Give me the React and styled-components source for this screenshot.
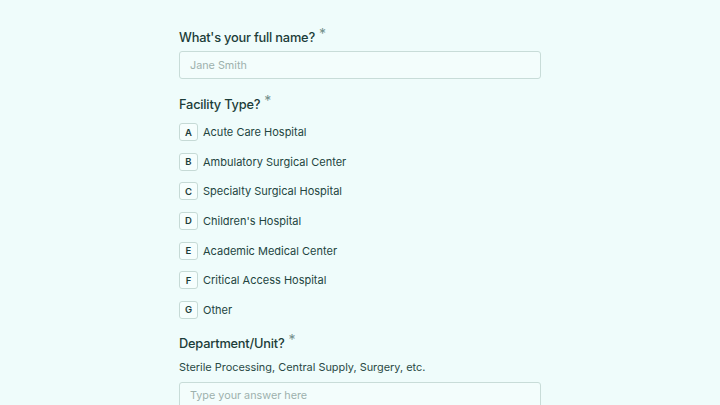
import React from "react";
import styled, { createGlobalStyle } from "styled-components";

const Global = createGlobalStyle`
  html, body { margin: 0; padding: 0; background: #effcfb; }
  body { font-family: Inter, "Noto Sans", sans-serif; -webkit-font-smoothing: antialiased; }
  * { box-sizing: border-box; }
`;

const Page = styled.div`
  width: 720px;
  height: 405px;
  overflow: hidden;
  display: flex;
  justify-content: center;
  padding-top: 27px;
`;

const Form = styled.div`
  width: 362px;
  display: flex;
  flex-direction: column;
`;

const Label = styled.div`
  font-size: 12.8px;
  line-height: 20px;
  font-weight: 500;
  letter-spacing: -0.2px;
  color: #1c3d39;
  margin-top: ${(p) => p.$mt || 0}px;
`;

const Star = styled.span`
  color: #74908b;
  font-size: 14px;
  font-weight: 400;
  margin-left: 4px;
  position: relative;
  top: -3px;
`;

const Input = styled.div`
  margin-top: ${(p) => p.$mt}px;
  height: 28px;
  flex-shrink: 0;
  border: 1px solid #c8dcd8;
  border-radius: 3px;
  background: #f3fdfc;
  display: flex;
  align-items: center;
  padding-left: 10px;
  font-size: 10.8px;
  color: #9db1ad;
`;

const Options = styled.div`
  margin-top: 8px;
  display: flex;
  flex-direction: column;
  gap: 11.67px;
`;

const Option = styled.div`
  display: flex;
  align-items: center;
  height: 18px;
  gap: 5px;
`;

const Key = styled.div`
  width: 19px;
  height: 18px;
  border: 1px solid #c6dad6;
  border-radius: 3px;
  background: #f6fefd;
  display: flex;
  align-items: center;
  justify-content: center;
  font-size: 9.5px;
  font-weight: 600;
  color: #1c3d39;
`;

const OptionText = styled.span`
  font-size: 11px;
  color: #234541;
`;

const Desc = styled.div`
  margin-top: 4px;
  font-size: 10.9px;
  line-height: 18px;
  color: #2a4a46;
`;

const options = [
  ["A", "Acute Care Hospital"],
  ["B", "Ambulatory Surgical Center"],
  ["C", "Specialty Surgical Hospital"],
  ["D", "Children's Hospital"],
  ["E", "Academic Medical Center"],
  ["F", "Critical Access Hospital"],
  ["G", "Other"],
];

export default function App() {
  return (
    <>
      <Global />
      <Page>
        <Form>
          <Label>
            What's your full name?<Star>*</Star>
          </Label>
          <Input $mt={3}>Jane Smith</Input>
          <Label $mt={15}>
            Facility Type?<Star>*</Star>
          </Label>
          <Options>
            {options.map(([k, t]) => (
              <Option key={k}>
                <Key>{k}</Key>
                <OptionText>{t}</OptionText>
              </Option>
            ))}
          </Options>
          <Label $mt={14}>
            Department/Unit?<Star>*</Star>
          </Label>
          <Desc>Sterile Processing, Central Supply, Surgery, etc.</Desc>
          <Input $mt={6}>Type your answer here</Input>
        </Form>
      </Page>
    </>
  );
}
